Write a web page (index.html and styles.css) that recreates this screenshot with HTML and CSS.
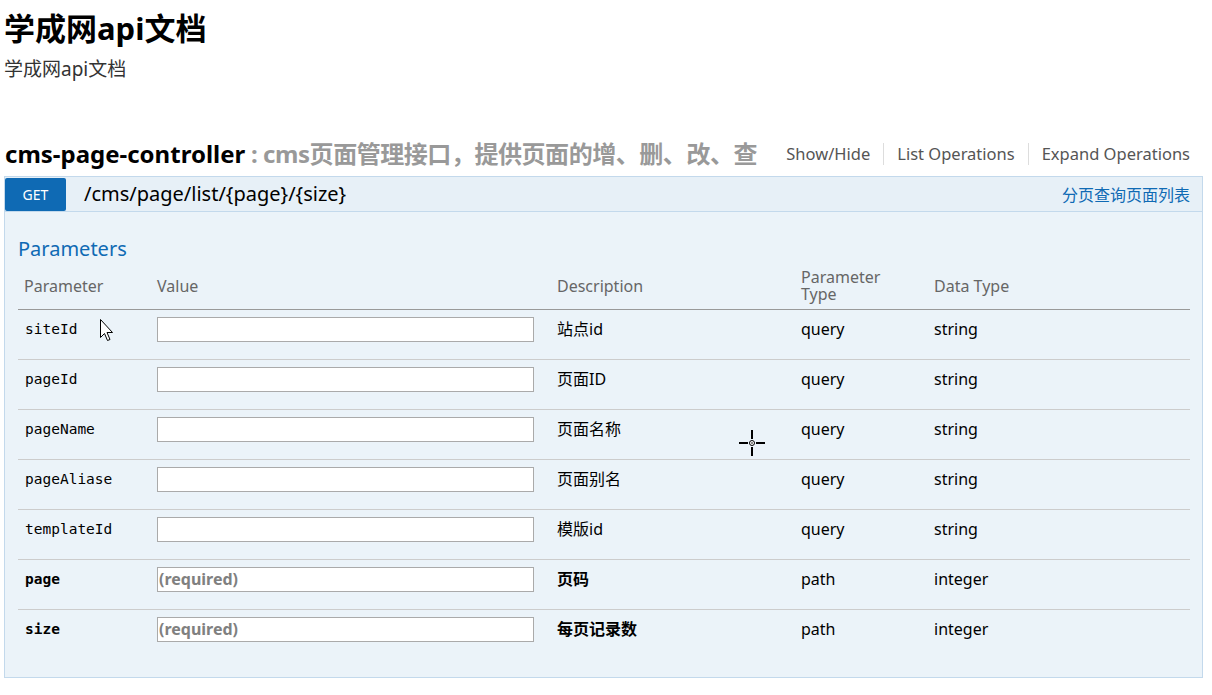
FILE: index.html
```html
<!DOCTYPE html>
<html lang="zh">
<head>
<meta charset="utf-8">
<title>学成网api文档</title>
<link rel="stylesheet" href="styles.css">
</head>
<body>
<div class="page">
  <h1 class="title">学成网api文档</h1>
  <div class="subtitle">学成网api文档</div>

  <div class="resource-head">
    <h2 class="resource-name">cms-page-controller<span class="resource-desc"> : cms页面管理接口，提供页面的增、删、改、查</span></h2>
    <ul class="resource-links">
      <li>Show/Hide</li>
      <li>List Operations</li>
      <li>Expand Operations</li>
    </ul>
  </div>

  <div class="operation">
    <div class="op-head">
      <span class="method">GET</span>
      <span class="path">/cms/page/list/{page}/{size}</span>
      <span class="summary">分页查询页面列表</span>
    </div>
    <div class="op-body">
      <h4 class="params-title">Parameters</h4>
      <table class="params">
        <colgroup>
          <col class="c1"><col class="c2"><col class="c3"><col class="c4"><col class="c5">
        </colgroup>
        <thead>
          <tr>
            <th>Parameter</th>
            <th>Value</th>
            <th>Description</th>
            <th>Parameter<br>Type</th>
            <th>Data Type</th>
          </tr>
        </thead>
        <tbody>
          <tr>
            <td class="pname">siteId</td>
            <td><input class="val" type="text"></td>
            <td>站点id</td>
            <td>query</td>
            <td>string</td>
          </tr>
          <tr>
            <td class="pname">pageId</td>
            <td><input class="val" type="text"></td>
            <td>页面ID</td>
            <td>query</td>
            <td>string</td>
          </tr>
          <tr>
            <td class="pname">pageName</td>
            <td><input class="val" type="text"></td>
            <td>页面名称</td>
            <td>query</td>
            <td>string</td>
          </tr>
          <tr>
            <td class="pname">pageAliase</td>
            <td><input class="val" type="text"></td>
            <td>页面别名</td>
            <td>query</td>
            <td>string</td>
          </tr>
          <tr>
            <td class="pname">templateId</td>
            <td><input class="val" type="text"></td>
            <td>模版id</td>
            <td>query</td>
            <td>string</td>
          </tr>
          <tr class="required">
            <td class="pname">page</td>
            <td><input class="val" type="text" placeholder="(required)"></td>
            <td class="rdesc">页码</td>
            <td>path</td>
            <td>integer</td>
          </tr>
          <tr class="required">
            <td class="pname">size</td>
            <td><input class="val" type="text" placeholder="(required)"></td>
            <td class="rdesc">每页记录数</td>
            <td>path</td>
            <td>integer</td>
          </tr>
        </tbody>
      </table>
    </div>
  </div>

  <svg class="cursor-arrow" width="14" height="24" viewBox="0 0 14 24">
    <path d="M0.5 0.5 L0.5 18.5 L4.5 14.5 L7.5 21.5 L10 20.5 L7 13.5 L12.5 13.5 Z" fill="#fff" stroke="#000" stroke-width="1"/>
  </svg>
  <svg class="cursor-cross" width="28" height="28" viewBox="0 0 28 28">
    <path d="M14 1 V10 M14 18 V27 M1 14 H10 M18 14 H27" stroke="#000" stroke-width="2"/>
    <circle cx="14" cy="14" r="2.5" fill="#fff" stroke="#000" stroke-width="1"/>
    <circle cx="14" cy="14" r="0.8" fill="#000"/>
  </svg>
</div>
</body>
</html>
```

FILE: styles.css
```css
* { box-sizing: border-box; }

html, body {
  margin: 0;
  padding: 0;
  background: #fff;
}

body {
  font-family: "Noto Sans", "Noto Sans CJK SC", sans-serif;
  color: #000;
}

.page {
  position: relative;
  width: 1203px;
  padding-left: 4px;
}

.title {
  margin: 0;
  padding-top: 8px;
  font-size: 31px;
  line-height: 40px;
  font-weight: 700;
}

.subtitle {
  margin-top: 9px;
  font-size: 19px;
  line-height: 24px;
  color: #333;
}

.resource-head {
  margin-top: 57px;
  display: flex;
  justify-content: space-between;
  align-items: center;
  height: 32px;
  margin-bottom: 6px;
}

.resource-name {
  margin: 0;
  padding-left: 1px;
  font-size: 24px;
  line-height: 30px;
  font-weight: 700;
  color: #000;
  white-space: nowrap;
}

.resource-desc {
  color: #999;
  letter-spacing: -0.45px;
}

.resource-links {
  list-style: none;
  margin: 0;
  padding: 0 13px 0 0;
  display: flex;
  align-items: center;
}

.resource-links li {
  font-size: 16.5px;
  line-height: 22px;
  color: #555;
  padding: 0 13px;
  border-left: 1px solid #ddd;
  white-space: nowrap;
}

.resource-links li:first-child {
  border-left: none;
}

.resource-links li:last-child {
  padding-right: 0;
}

.operation {
  border: 1px solid #c3d9ec;
  background: #ebf3f9;
  height: 502px;
}

.op-head {
  display: flex;
  align-items: center;
  height: 35px;
  background: #e7f0f7;
  border-bottom: 1px solid #c3d9ec;
}

.method {
  width: 61px;
  height: 33px;
  background: #0f6ab4;
  color: #fff;
  border-radius: 2px;
  font-size: 14px;
  line-height: 34px;
  text-align: center;
}

.path {
  margin-left: 18px;
  font-size: 20px;
  line-height: 24px;
  color: #000;
  flex: 1;
}

.summary {
  font-size: 16px;
  color: #0f6ab4;
  padding-right: 12px;
}

.op-body {
  padding: 24px 13px 0 13px;
}

.params-title {
  margin: 0 0 2px 0;
  font-size: 20px;
  line-height: 26px;
  font-weight: 400;
  color: #0f6ab4;
}

.params {
  width: 1172px;
  border-collapse: collapse;
  table-layout: fixed;
}

.c1 { width: 133px; }
.c2 { width: 400px; }
.c3 { width: 244px; }
.c4 { width: 133px; }

.params th {
  text-align: left;
  font-weight: 400;
  font-size: 16px;
  line-height: 17px;
  color: #666;
  padding: 5px 6px 5px 6px;
  height: 45px;
  vertical-align: middle;
  border-bottom: 1px solid #999;
}

.params td {
  padding: 7px 6px 0 6px;
  height: 50px;
  vertical-align: top;
  font-size: 16px;
  line-height: 25px;
  border-bottom: 1px solid #ccc;
}

.params tbody tr:last-child td {
  border-bottom: none;
}

.params td.pname {
  font-family: "DejaVu Sans Mono", "Liberation Mono", monospace;
  font-size: 14.5px;
  padding-left: 7px;
}

.required td.pname,
.required td.rdesc {
  font-weight: 700;
}

.val {
  display: block;
  width: 377px;
  height: 25px;
  margin: 0;
  padding: 0 1px;
  border: 1px solid #aaa;
  background: #fff;
  font-family: "Noto Sans", "Noto Sans CJK SC", sans-serif;
  font-size: 16px;
  font-weight: 700;
  outline: none;
}

.val::placeholder {
  color: #808080;
  font-weight: 700;
}

.cursor-arrow {
  position: absolute;
  left: 100px;
  top: 319px;
}

.cursor-cross {
  position: absolute;
  left: 738px;
  top: 429px;
}
```
